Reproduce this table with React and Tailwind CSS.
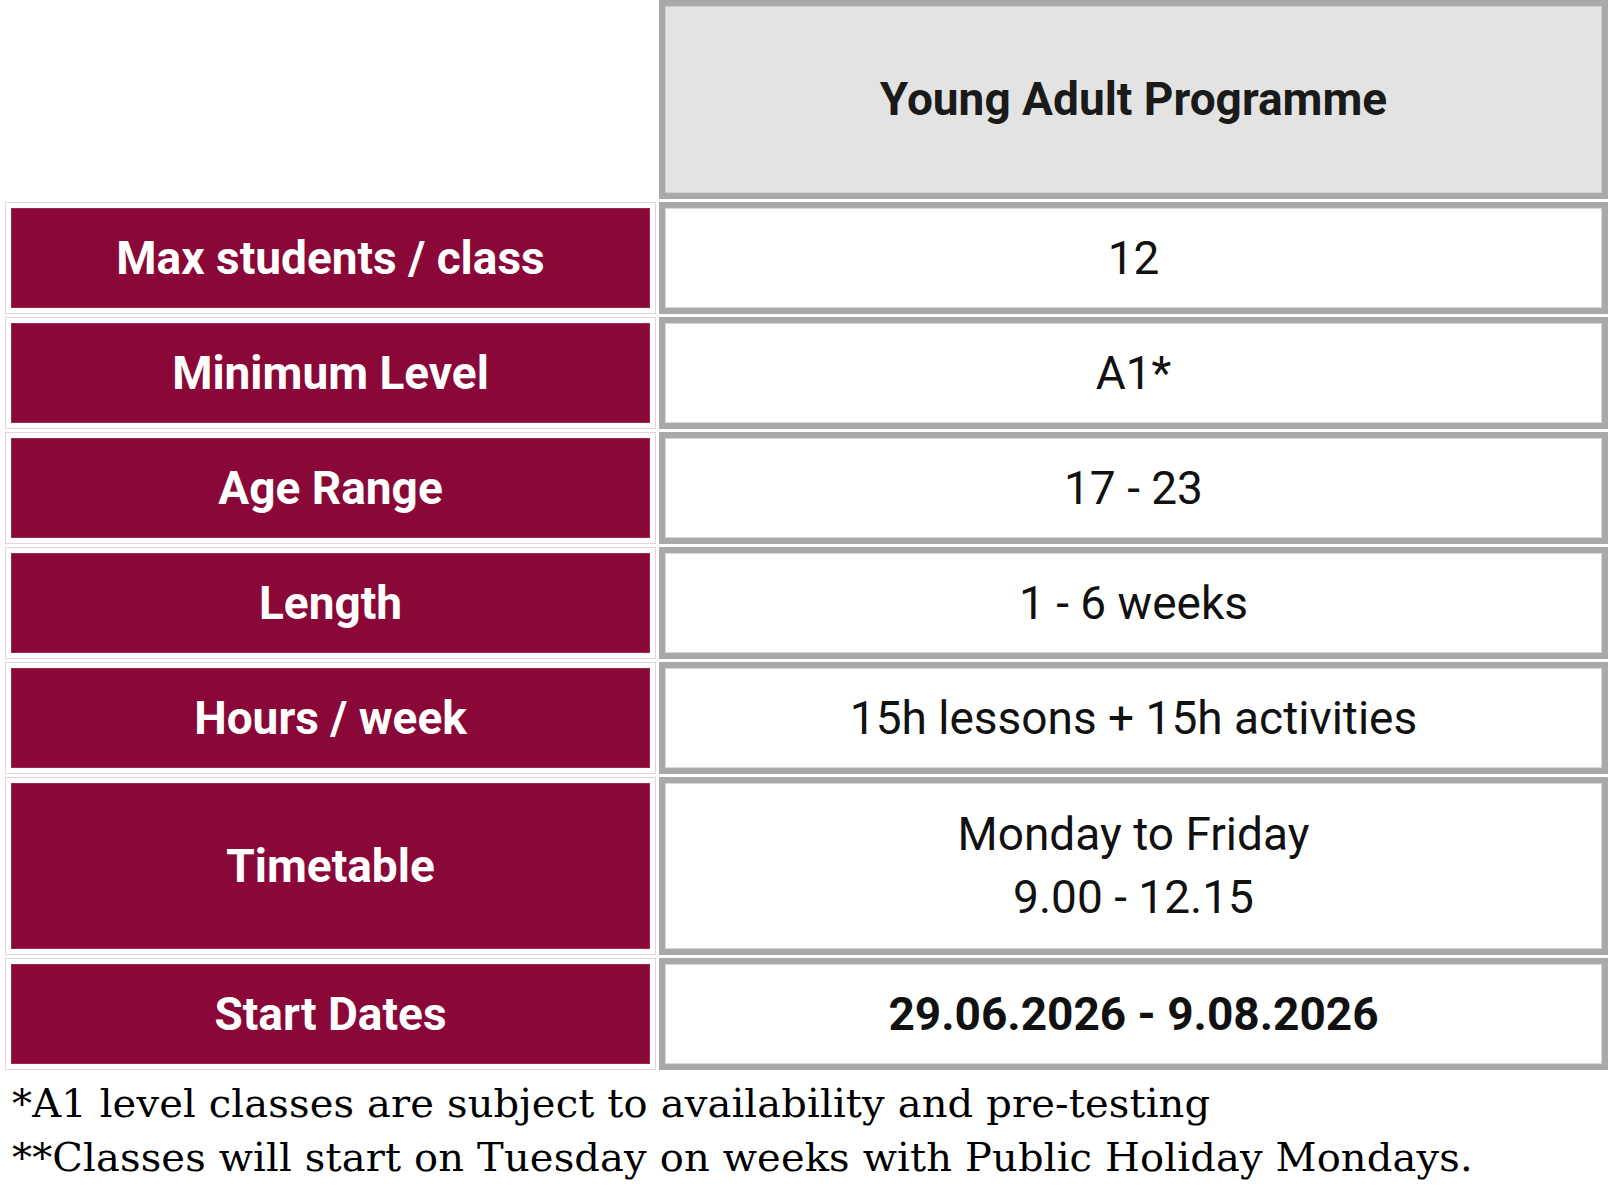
const rows = [
  { label: 'Max students / class', value: ['12'] },
  { label: 'Minimum Level', value: ['A1*'] },
  { label: 'Age Range', value: ['17 - 23'] },
  { label: 'Length', value: ['1 - 6 weeks'] },
  { label: 'Hours / week', value: ['15h lessons + 15h activities'] },
  { label: 'Timetable', value: ['Monday to Friday', '9.00 - 12.15'], tall: true },
  { label: 'Start Dates', value: ['29.06.2026 - 9.08.2026'], bold: true },
]

function LabelCell({ children, tall }) {
  return (
    <div className={`border border-[#ead0d9] p-[5px] ${tall ? 'h-[178px]' : 'h-[112px]'}`}>
      <div className="flex h-full items-center justify-center border border-[#9a2a52] bg-[#890838] text-[46px] font-bold text-white">
        {children}
      </div>
    </div>
  )
}

function ValueCell({ lines, tall, bold }) {
  return (
    <div className={`border-[6px] border-[#a9a9a9] ${tall ? 'h-[178px]' : 'h-[112px]'}`}>
      <div
        className={`flex h-full flex-col items-center justify-center border border-[#d8d8d8] bg-white text-[46px] leading-[63px] text-[#111111] ${bold ? 'font-bold' : 'font-normal'}`}
      >
        {lines.map((line) => (
          <span key={line}>{line}</span>
        ))}
      </div>
    </div>
  )
}

export default function App() {
  return (
    <div className="min-h-screen w-[1619px] bg-white font-['Roboto',sans-serif]">
      <div className="ml-[5px] grid w-[1603px] grid-cols-[651px_949px] gap-[3px]">
        {/* header */}
        <div />
        <div className="h-[199px] border-[6px] border-[#a9a9a9]">
          <div className="flex h-full items-center justify-center border border-[#d0d0d0] bg-[#e3e3e3] text-[46px] font-bold text-[#1a1a1a]">
            Young Adult Programme
          </div>
        </div>

        {rows.map((row) => (
          <div key={row.label} className="contents">
            <LabelCell tall={row.tall}>{row.label}</LabelCell>
            <ValueCell lines={row.value} tall={row.tall} bold={row.bold} />
          </div>
        ))}
      </div>

      {/* footnotes */}
      <div className="pl-[12px] pt-[6px] font-['DejaVu_Serif',serif] text-[40px] leading-[54px] tracking-[0.15px] text-black">
        <p>*A1 level classes are subject to availability and pre-testing</p>
        <p>**Classes will start on Tuesday on weeks with Public Holiday Mondays.</p>
      </div>
    </div>
  )
}
